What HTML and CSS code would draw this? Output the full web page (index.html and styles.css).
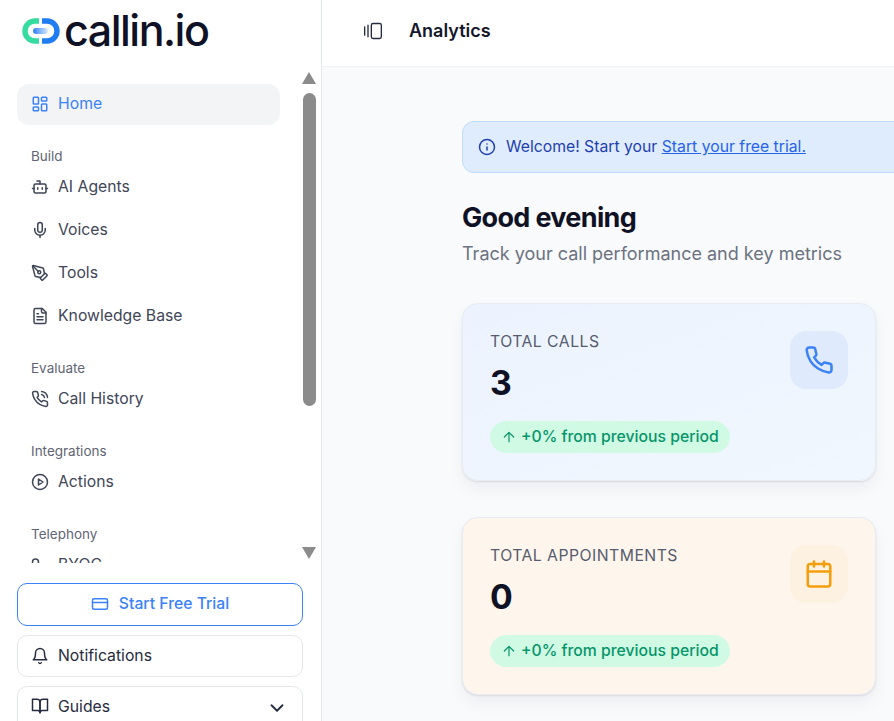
FILE: index.html
```html
<!DOCTYPE html>
<html lang="en">
<head>
<meta charset="utf-8">
<title>Analytics</title>
<link rel="stylesheet" href="styles.css">
</head>
<body>
<div class="app">
  <aside class="sidebar">
    <div class="brand">
      <svg class="brand-mark" viewBox="0 0 38 26" fill="none">
        <defs><linearGradient id="pill" x1="0" x2="1"><stop offset="0" stop-color="#2f7ff5"/><stop offset="1" stop-color="#dce9fd"/></linearGradient></defs>
        <path d="M17 3H13a10 10 0 0 0 0 20h4" stroke="#34dca0" stroke-width="5.4"/>
        <path d="M20 3h5a10 10 0 0 1 0 20h-5" stroke="#1f7cf2" stroke-width="5.4"/>
        <rect x="11" y="10" width="15" height="6" rx="3" fill="url(#pill)"/>
      </svg>
      <span class="brand-name">callin.io</span>
    </div>
    <div class="nav-wrap">
      <nav class="nav">
        <a class="nav-item active"><svg class="ico" viewBox="0 0 24 24"><rect x="3" y="3" width="7" height="9" rx="1"/><rect x="14" y="3" width="7" height="5" rx="1"/><rect x="14" y="12" width="7" height="9" rx="1"/><rect x="3" y="16" width="7" height="5" rx="1"/></svg>Home</a>
        <div class="nav-label">Build</div>
        <a class="nav-item"><svg class="ico" viewBox="0 0 24 24"><path d="M12 8V4H8"/><rect x="4" y="8" width="16" height="12" rx="2"/><path d="M2 14h2M20 14h2M15 13v2M9 13v2"/></svg>AI Agents</a>
        <a class="nav-item"><svg class="ico" viewBox="0 0 24 24"><path d="M12 2a3 3 0 0 0-3 3v7a3 3 0 0 0 6 0V5a3 3 0 0 0-3-3Z"/><path d="M19 10v2a7 7 0 0 1-14 0v-2"/><path d="M12 19v3"/></svg>Voices</a>
        <a class="nav-item"><svg class="ico" viewBox="0 0 24 24"><path d="M15.707 21.293a1 1 0 0 1-1.414 0l-1.586-1.586a1 1 0 0 1 0-1.414l5.586-5.586a1 1 0 0 1 1.414 0l1.586 1.586a1 1 0 0 1 0 1.414z"/><path d="m18 13-1.375-6.874a1 1 0 0 0-.746-.776L3.235 2.028a1 1 0 0 0-1.207 1.207L5.35 15.879a1 1 0 0 0 .776.746L13 18"/><path d="m2.3 2.3 7.286 7.286"/><circle cx="11" cy="11" r="2"/></svg>Tools</a>
        <a class="nav-item"><svg class="ico" viewBox="0 0 24 24"><path d="M15 2H6a2 2 0 0 0-2 2v16a2 2 0 0 0 2 2h12a2 2 0 0 0 2-2V7Z"/><path d="M14 2v4a2 2 0 0 0 2 2h4"/><path d="M10 9H8M16 13H8M16 17H8"/></svg>Knowledge Base</a>
        <div class="nav-label">Evaluate</div>
        <a class="nav-item"><svg class="ico" viewBox="0 0 24 24"><path d="M22 16.92v3a2 2 0 0 1-2.18 2 19.79 19.79 0 0 1-8.63-3.07 19.5 19.5 0 0 1-6-6 19.79 19.79 0 0 1-3.07-8.67A2 2 0 0 1 4.11 2h3a2 2 0 0 1 2 1.72 12.84 12.84 0 0 0 .7 2.81 2 2 0 0 1-.45 2.11L8.09 9.91a16 16 0 0 0 6 6l1.27-1.27a2 2 0 0 1 2.11-.45 12.84 12.84 0 0 0 2.81.7A2 2 0 0 1 22 16.92z"/><path d="M14.05 2a9 9 0 0 1 8 7.94"/><path d="M14.05 6A5 5 0 0 1 18 10"/></svg>Call History</a>
        <div class="nav-label">Integrations</div>
        <a class="nav-item"><svg class="ico" viewBox="0 0 24 24"><circle cx="12" cy="12" r="10"/><path d="M10 8l6 4-6 4z"/></svg>Actions</a>
        <div class="nav-label">Telephony</div>
        <a class="nav-item"><svg class="ico" viewBox="0 0 24 24"><circle cx="6" cy="8" r="4"/><path d="M6 12v10"/></svg>BYOC</a>
      </nav>
      <div class="scrollbar">
        <span class="arrow-up"></span>
        <span class="thumb"></span>
        <span class="arrow-down"></span>
      </div>
    </div>
    <div class="side-foot">
      <button class="btn btn-trial"><svg class="ico" viewBox="0 0 24 24"><rect x="2" y="5" width="20" height="14" rx="2"/><path d="M2 10h20"/></svg>Start Free Trial</button>
      <button class="btn"><svg class="ico" viewBox="0 0 24 24"><path d="M6 8a6 6 0 0 1 12 0c0 7 3 9 3 9H3s3-2 3-9"/><path d="M10.3 21a1.94 1.94 0 0 0 3.4 0"/></svg>Notifications</button>
      <button class="btn btn-guides"><svg class="ico" viewBox="0 0 24 24"><path d="M2 3h6a4 4 0 0 1 4 4v14a3 3 0 0 0-3-3H2z"/><path d="M22 3h-6a4 4 0 0 0-4 4v14a3 3 0 0 1 3-3h7z"/></svg>Guides<svg class="ico chev" viewBox="0 0 24 24"><path d="m6 9 6 6 6-6"/></svg></button>
    </div>
  </aside>
  <main class="main">
    <header class="topbar">
      <svg class="ico toggle" viewBox="0 0 24 24"><path d="M2 7v10M6 5v14"/><rect x="10" y="3" width="12" height="18" rx="2"/></svg>
      <h1 class="page-title">Analytics</h1>
    </header>
    <div class="content">
      <div class="banner">
        <svg class="ico" viewBox="0 0 24 24"><circle cx="12" cy="12" r="10"/><path d="M12 16v-4M12 8h.01"/></svg>
        <span>Welcome! Start your <a class="banner-link">Start your free trial.</a></span>
      </div>
      <h2 class="greeting">Good evening</h2>
      <p class="subtitle">Track your call performance and key metrics</p>
      <section class="cards">
        <article class="card card-blue">
          <div class="card-body">
            <div class="card-label">Total Calls</div>
            <div class="card-value">3</div>
            <div class="trend"><svg class="ico" viewBox="0 0 24 24"><path d="m5 12 7-7 7 7M12 19V5"/></svg>+0% from previous period</div>
          </div>
          <div class="card-icon"><svg class="ico" viewBox="0 0 24 24"><path d="M22 16.92v3a2 2 0 0 1-2.18 2 19.79 19.79 0 0 1-8.63-3.07 19.5 19.5 0 0 1-6-6 19.79 19.79 0 0 1-3.07-8.67A2 2 0 0 1 4.11 2h3a2 2 0 0 1 2 1.72 12.84 12.84 0 0 0 .7 2.81 2 2 0 0 1-.45 2.11L8.09 9.91a16 16 0 0 0 6 6l1.27-1.27a2 2 0 0 1 2.11-.45 12.84 12.84 0 0 0 2.81.7A2 2 0 0 1 22 16.92z"/></svg></div>
        </article>
        <article class="card card-orange">
          <div class="card-body">
            <div class="card-label">Total Appointments</div>
            <div class="card-value">0</div>
            <div class="trend"><svg class="ico" viewBox="0 0 24 24"><path d="m5 12 7-7 7 7M12 19V5"/></svg>+0% from previous period</div>
          </div>
          <div class="card-icon"><svg class="ico" viewBox="0 0 24 24"><path d="M8 2v4M16 2v4"/><rect x="3" y="4" width="18" height="18" rx="2"/><path d="M3 10h18"/></svg></div>
        </article>
      </section>
    </div>
  </main>
</div>
</body>
</html>
```
FILE: styles.css
```css
* { box-sizing: border-box; }
html, body { margin: 0; height: 100%; overflow: hidden; }
body { font-family: Inter, "Liberation Sans", sans-serif; color: #0f1124; background: #fff; }

.ico { width: 18px; height: 18px; flex: none; fill: none; stroke: currentColor; stroke-width: 2; stroke-linecap: round; stroke-linejoin: round; }

.app { display: flex; height: 721px; }

.sidebar { width: 322px; flex: none; display: flex; flex-direction: column; background: #fff; border-right: 1px solid #e5e7eb; }

.brand { height: 66px; flex: none; display: flex; align-items: center; gap: 4px; padding: 0 0 5px 22px; }
.brand-mark { width: 38px; height: 26px; flex: none; }
.brand-name { font-size: 43px; font-weight: 500; letter-spacing: -1.5px; color: #0f1226; line-height: 1; }

.nav-wrap { height: 497px; flex: none; display: flex; padding-left: 17px; overflow: hidden; }
.nav { width: 263px; flex: none; padding-top: 18px; overflow: hidden; }
.nav-item { display: flex; align-items: center; gap: 9px; height: 41px; margin-bottom: 2px; padding: 0 14px 3px; border-radius: 12px; font-size: 15.75px; color: #3f4658; }
.nav-item .ico { margin-top: 2px; }
.nav-item.active { margin-bottom: 1px; background: #f3f4f6; color: #3b82f6; }
.nav-label { height: 20px; margin-top: 22px; padding-left: 14px; font-size: 13.5px; line-height: 18px; color: #5f6575; }

.scrollbar { width: 14px; flex: none; margin-left: 22px; padding: 6px 0 4px; display: flex; flex-direction: column; align-items: center; }
.arrow-up, .arrow-down { width: 0; height: 0; border-left: 7.5px solid transparent; border-right: 7.5px solid transparent; }
.arrow-up { border-bottom: 12px solid #8b8b8b; }
.arrow-down { border-top: 12px solid #8b8b8b; margin-top: auto; }
.thumb { width: 13px; height: 313px; margin-top: 9px; border-radius: 7px; background: #8b8b8b; }

.side-foot { flex: none; padding: 20px 18px 0 17px; display: flex; flex-direction: column; gap: 9px; }
.btn { height: 42px; width: 286px; flex: none; display: flex; align-items: center; gap: 9px; padding: 0 13px 1px; background: #fff; border: 1px solid #e5e7eb; border-radius: 10px; font: 400 15.75px Inter, "Liberation Sans", sans-serif; color: #262c40; }
.btn-trial { height: 43px; justify-content: center; gap: 10px; padding-bottom: 2px; border-color: #3b82f6; color: #3b82f6; font-weight: 500; }
.btn-guides { height: 60px; align-items: flex-start; padding-top: 10px; }
.chev { margin-left: auto; width: 22px; height: 22px; margin-right: 1px; }

.main { flex: 1; min-width: 0; display: flex; flex-direction: column; background: #f9fafc; overflow: hidden; }
.topbar { height: 67px; flex: none; display: flex; align-items: center; gap: 26px; padding: 0 0 5px 41px; background: #fff; border-bottom: 1px solid #f1f2f5; }
.toggle { width: 20px; height: 20px; color: #262c40; stroke-width: 1.6; }
.page-title { margin: 0; font-size: 18px; font-weight: 600; color: #14172a; }

.content { padding: 54px 0 0 140px; width: 900px; }
.banner { width: 600px; height: 52px; display: flex; align-items: center; gap: 10px; padding: 0 15px 1px; background: #dfecfd; border: 1px solid #bfdbfe; border-radius: 12px; font-size: 15.75px; color: #1e40af; }
.banner-link { color: #2563eb; text-decoration: underline; }

.greeting { margin: 28px 0 0; font-size: 27px; font-weight: 700; line-height: 34px; letter-spacing: -.675px; color: #0f1124; }
.subtitle { margin: 7px 0 0; font-size: 18px; line-height: 24px; color: #6b7280; }

.cards { width: 414px; margin-top: 37px; display: flex; flex-direction: column; gap: 36px; }
.card { height: 178px; display: flex; justify-content: space-between; padding: 27px; border: 1px solid #e8ecf2; border-radius: 16px; box-shadow: 0 1px 2px rgba(15, 23, 42, .1), 0 8px 16px rgba(15, 23, 42, .05); }
.card-blue { background: linear-gradient(160deg, #ecf3fe, #f1f7fe); }
.card-orange { background: #fef6ec; }
.card-label { padding-top: 1px; font-size: 15.75px; line-height: 20px; letter-spacing: .47px; text-transform: uppercase; color: #565c6e; }
.card-value { margin-top: 11px; font-size: 33.75px; font-weight: 700; line-height: 40px; color: #0f1124; }
.trend { width: 240px; height: 32px; margin-top: 18px; display: flex; align-items: center; gap: 4px; padding: 0 11px 1px; background: #d1fae5; border-radius: 16px; font-size: 15.75px; font-weight: 500; color: #059669; white-space: nowrap; }
.trend .ico { width: 16px; height: 16px; stroke-width: 1.8; }
.card-icon { width: 58px; height: 58px; display: flex; align-items: center; justify-content: center; border-radius: 16px; }
.card-icon .ico { width: 30px; height: 30px; }
.card-blue .card-icon { background: #dfeafc; color: #3b82f6; }
.card-orange .card-icon { background: #fdf1e1; color: #f59e0b; }
```
